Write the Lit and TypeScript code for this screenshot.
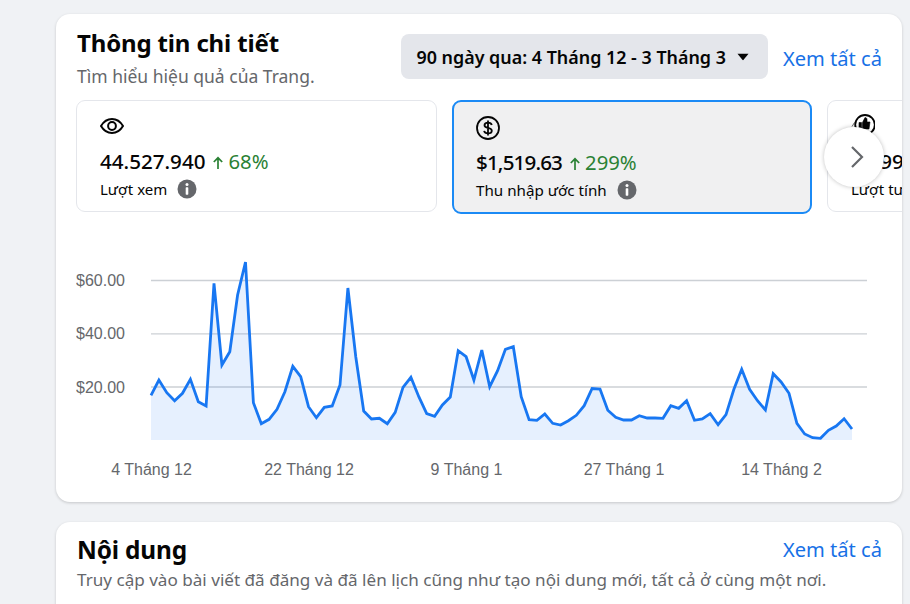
import { LitElement, html, css, svg } from "lit";
import { customElement } from "lit/decorators.js";

const ys = [395.3,380,392.7,400.7,393.3,379.3,401.7,406,283.3,365,351.7,295,262,402.7,423.7,419.3,409.3,391.7,366.3,376.7,406.7,417.7,407.3,406,385,288,357,411,419,418.3,423.7,412.3,387.3,377.3,396.7,413.7,416.3,405,397,350.7,356.7,380,350,386.7,370.7,349.3,346.7,396.7,419.7,420.3,414,423.3,425,420.7,415.3,405.7,388.5,389,410.3,417.3,420,420,415.7,418,418,418.3,405.7,408.3,400.7,420.3,419,413.7,424.7,414.7,389.3,369.3,389.3,400.7,410,373.7,382,393.3,423.3,434,437.7,438.3,430.3,426,418.7,429];
const STEP = 701 / (ys.length - 1);
const pts = ys.map((y, i) => `${(151 + i * STEP - 76).toFixed(1)},${(y - 240).toFixed(1)}`).join(" ");
const area = `75,200 ${pts} 776,200`;

const infoIcon = html`<svg class="info" viewBox="0 0 20 20" width="20" height="20"><circle cx="10" cy="10" r="9.5" fill="#65676b"/><circle cx="10" cy="5.6" r="1.5" fill="#fff"/><rect x="8.7" y="8.3" width="2.6" height="7.4" rx="0.6" fill="#fff"/></svg>`;
const upArrow = html`<svg class="up" viewBox="0 0 12 14" width="12" height="14"><path d="M6 13V2M1.8 6 6 1.8 10.2 6" fill="none" stroke="#2a8134" stroke-width="1.7"/></svg>`;

@customElement("app-root")
export class AppRoot extends LitElement {
  static styles = css`
    :host { display: block; height: 604px; overflow: hidden; background: #f0f2f5; padding: 14px 8px 0 56px; box-sizing: border-box; font-family: "Noto Sans", "Open Sans", sans-serif; color: #050505; }
    .card { background: #fff; border-radius: 14px; box-shadow: 0 1px 3px rgba(0,0,0,.18); margin-bottom: 20px; position: relative; overflow: hidden; }
    .insights { height: 488px; }
    .head { display: flex; align-items: flex-start; padding: 12px 20px 0 21px; height: 74px; box-sizing: border-box; }
    .titles { flex: 1; }
    h2 { margin: 0; font-size: 24px; line-height: 34px; font-weight: 700; letter-spacing: -0.15px; }
    .sub { font-size: 17.5px; line-height: 24px; color: #65676b; margin-top: 4px; white-space: nowrap; }
    .range { display: flex; align-items: center; gap: 11px; height: 45px; padding: 0 19px 0 15px; margin-top: 8px; margin-right: 15px; background: #e4e6eb; border-radius: 8px; font-size: 17.9px; font-weight: 600; box-sizing: border-box; white-space: nowrap; }
    .link { color: #1771e6; font-size: 20.1px; line-height: 30px; white-space: nowrap; }
    .head .link { margin-top: 18px; }
    .metrics { display: flex; align-items: flex-start; gap: 15px; padding: 12px 0 0 20px; }
    .metric { flex: 0 0 361px; height: 112px; box-sizing: border-box; border: 1px solid #e4e6eb; border-radius: 9px; padding: 13px 23px 0; }
    .metric.on { flex-basis: 360px; height: 114px; border: 2px solid #1b8af5; background: #f0f0f1; padding: 14px 22px 0; }
    .ico { display: block; height: 24px; }
    .value { display: flex; align-items: center; margin-top: 9px; font-size: 20.6px; line-height: 28px; font-weight: 500; white-space: nowrap; }
    .on .value { margin-top: 8px; }
    .on .amount { letter-spacing: -0.85px; }
    .up { margin: 3px 4px 0 7px; }
    .delta { color: #2a8134; font-weight: 400; font-size: 20.3px; }
    .label { display: flex; align-items: center; gap: 10px; font-size: 15px; line-height: 22px; margin-top: 3px; white-space: nowrap; }
    .on .label { font-size: 15.2px; }
    .next { position: absolute; left: 768px; top: 113px; width: 60px; height: 60px; padding-left: 5px; box-sizing: border-box; border-radius: 50%; background: #fff; box-shadow: 0 0 4px rgba(0,0,0,.25); display: flex; align-items: center; justify-content: center; }
    .chart { display: block; margin: 26px 0 0 20px; }
    .yl { font: 16px "Liberation Sans", sans-serif; fill: #65676b; }
    .xl { font: 16px "Liberation Sans", sans-serif; fill: #65676b; text-anchor: middle; }
    .row2 { padding: 13px 20px 0 21px; height: 100px; box-sizing: border-box; }
    .row2top { display: flex; justify-content: space-between; align-items: center; height: 30px; }
    .row2 h2 { font-size: 24.4px; }
    .desc { font-size: 17.1px; line-height: 26px; color: #65676b; margin-top: 2px; white-space: nowrap; }
  `;

  render() {
    return html`
      <section class="card insights">
        <div class="head">
          <div class="titles">
            <h2>Thông tin chi tiết</h2>
            <div class="sub">Tìm hiểu hiệu quả của Trang.</div>
          </div>
          <div class="range">
            <span>90 ngày qua: 4 Tháng 12 - 3 Tháng 3</span>
            <svg viewBox="0 0 12 8" width="12" height="8"><path d="M0.5 0.8h11L6.600 6.800a.8.8 0 0 1-1.200 0z" fill="#050505"/></svg>
          </div>
          <span class="link">Xem tất cả</span>
        </div>
        <div class="metrics">
          <div class="metric">
            <svg class="ico" viewBox="0 0 24 24" width="24" height="24"><path d="M1 12c2.600-4.400 6.500-7 11-7s8.400 2.600 11 7c-2.600 4.400-6.500 7-11 7S3.600 16.400 1 12z" fill="none" stroke="#050505" stroke-width="2"/><circle cx="12" cy="12" r="3.900" fill="none" stroke="#050505" stroke-width="2"/></svg>
            <div class="value"><span>44.527.940</span>${upArrow}<span class="delta">68%</span></div>
            <div class="label"><span>Lượt xem</span>${infoIcon}</div>
          </div>
          <div class="metric on">
            <svg class="ico" viewBox="0 0 24 24" width="24" height="24"><circle cx="12" cy="12" r="11" fill="none" stroke="#050505" stroke-width="1.800"/><path d="M15.800 9c-.4-1.500-2-2.400-3.800-2.400-2 0-3.500 1-3.500 2.600 0 3.600 7.300 1.900 7.300 5.500 0 1.700-1.600 2.700-3.800 2.700-1.900 0-3.500-.9-3.900-2.500M12 4.500v15" fill="none" stroke="#050505" stroke-width="1.800"/></svg>
            <div class="value"><span class="amount">$1,519.63</span>${upArrow}<span class="delta">299%</span></div>
            <div class="label"><span>Thu nhập ước tính</span>${infoIcon}</div>
          </div>
          <div class="metric">
            <svg class="ico" viewBox="0 0 24 24" width="24" height="24"><circle cx="14" cy="10.800" r="9.800" fill="none" stroke="#050505" stroke-width="1.800"/><path d="M8 8.500h2.500v6.500H8zM11.500 8.500l2.500-5c1.200 0 2 .8 2 2v2.500h3l-1 7h-6.500zM1 12.500 3.500 8.500" fill="#050505" stroke="#050505" stroke-width="0.600"/></svg>
            <div class="value"><span>2.399.120</span></div>
            <div class="label"><span>Lượt tương tác</span>${infoIcon}</div>
          </div>
        </div>
        <div class="next"><svg viewBox="0 0 14 24" width="14" height="24"><path d="M2 2l10 10L2 22" fill="none" stroke="#65676b" stroke-width="2.200"/></svg></div>
        <svg class="chart" viewBox="0 0 800 250" width="800" height="250">
          ${[280.5, 333.8, 387].map((y, i) => svg`
            <line x1="75" x2="791" y1=${y - 240} y2=${y - 240} stroke="#ccd0d5" stroke-width="1.300"/>
            <text class="yl" x="0" y=${y - 240 + 5.500}>${["$60.00", "$40.00", "$20.00"][i]}</text>`)}
          <polygon points=${area} fill="#1877f2" fill-opacity="0.11"/>
          <polyline points=${pts} fill="none" stroke="#1877f2" stroke-width="2.800" stroke-linejoin="miter"/>
          ${[["4 Tháng 12", 75.500], ["22 Tháng 12", 233], ["9 Tháng 1", 390.500], ["27 Tháng 1", 548], ["14 Tháng 2", 705.500]].map(([t, x]) => svg`<text class="xl" x=${x} y="235">${t}</text>`)}
        </svg>
      </section>
      <section class="card">
        <div class="row2">
          <div class="row2top"><h2>Nội dung</h2><span class="link">Xem tất cả</span></div>
          <div class="desc">Truy cập vào bài viết đã đăng và đã lên lịch cũng như tạo nội dung mới, tất cả ở cùng một nơi.</div>
        </div>
      </section>
    `;
  }
}
